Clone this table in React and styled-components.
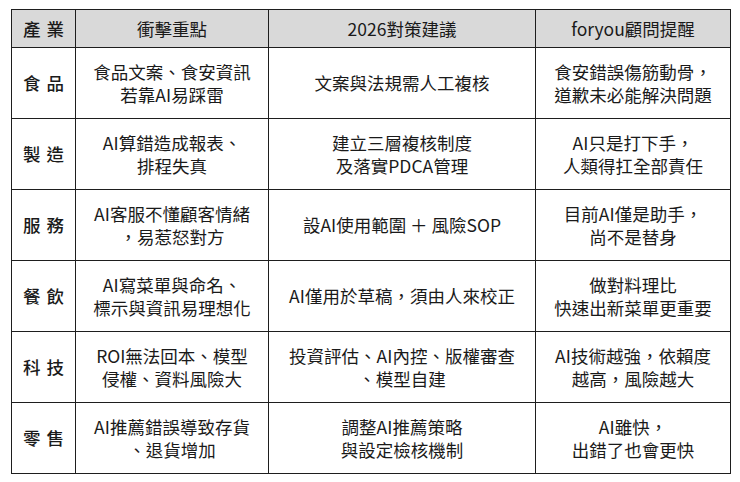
import styled, { createGlobalStyle } from 'styled-components'

const GlobalStyle = createGlobalStyle`
  html, body {
    margin: 0;
    padding: 0;
    background: #ffffff;
  }
  body {
    font-family: "Noto Sans CJK TC", "Noto Sans", sans-serif;
    color: #1a1a1a;
  }
`

const Page = styled.div`
  padding: 9px 11px;
`

const Table = styled.table`
  width: 719px;
  border-collapse: collapse;
  table-layout: fixed;
  font-size: 17.5px;
  line-height: 23.5px;
`

const Th = styled.th`
  height: 37px;
  padding: 0;
  background: #d9d9d9;
  border: 1px solid #1e1e1e;
  font-weight: ${p => (p.$strong ? 500 : 400)};
  word-spacing: ${p => (p.$strong ? '2px' : 'normal')};
  text-align: center;
  vertical-align: middle;
`

const Td = styled.td`
  height: 70px;
  padding: 0 6px;
  border: 1px solid #1e1e1e;
  text-align: center;
  vertical-align: middle;
  background: #fff;
`

const Industry = styled(Td)`
  padding: 0;
  font-weight: 500;
  word-spacing: 2px;
`

const rows = [
  ['食 品', ['食品文案、食安資訊', '若靠AI易踩雷'], ['文案與法規需人工複核'], ['食安錯誤傷筋動骨，', '道歉未必能解決問題']],
  ['製 造', ['AI算錯造成報表、', '排程失真'], ['建立三層複核制度', '及落實PDCA管理'], ['AI只是打下手，', '人類得扛全部責任']],
  ['服 務', ['AI客服不懂顧客情緒', '，易惹怒對方'], ['設AI使用範圍 ＋ 風險SOP'], ['目前AI僅是助手，', '尚不是替身']],
  ['餐 飲', ['AI寫菜單與命名、', '標示與資訊易理想化'], ['AI僅用於草稿，須由人來校正'], ['做對料理比', '快速出新菜單更重要']],
  ['科 技', ['ROI無法回本、模型', '侵權、資料風險大'], ['投資評估、AI內控、版權審查', '、模型自建'], ['AI技術越強，依賴度', '越高，風險越大']],
  ['零 售', ['AI推薦錯誤導致存貨', '、退貨增加'], ['調整AI推薦策略', '與設定檢核機制'], ['AI雖快，', '出錯了也會更快']],
]

function Lines({ items }) {
  return items.map((t, i) => (
    <span key={i}>
      {t}
      {i < items.length - 1 && <br />}
    </span>
  ))
}

export default function App() {
  return (
    <>
      <GlobalStyle />
      <Page>
        <Table>
          <colgroup>
            <col style={{ width: 64 }} />
            <col style={{ width: 193 }} />
            <col style={{ width: 267 }} />
            <col style={{ width: 195 }} />
          </colgroup>
          <thead>
            <tr>
              <Th $strong>產 業</Th>
              <Th>衝擊重點</Th>
              <Th>2026對策建議</Th>
              <Th>foryou顧問提醒</Th>
            </tr>
          </thead>
          <tbody>
            {rows.map(([name, impact, plan, note]) => (
              <tr key={name}>
                <Industry>{name}</Industry>
                <Td><Lines items={impact} /></Td>
                <Td><Lines items={plan} /></Td>
                <Td><Lines items={note} /></Td>
              </tr>
            ))}
          </tbody>
        </Table>
      </Page>
    </>
  )
}
